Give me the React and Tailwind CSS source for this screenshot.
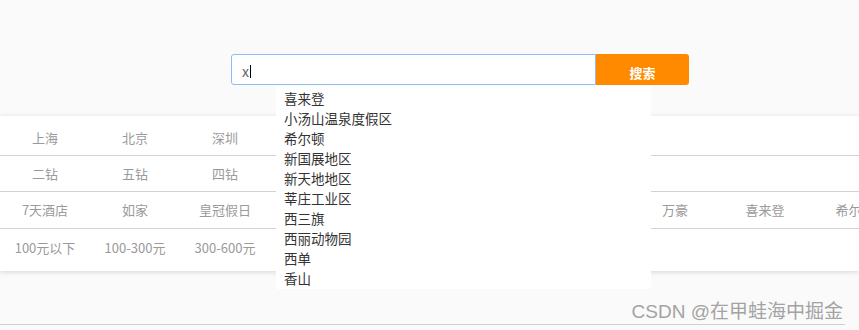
import React from 'react';

const font = { fontFamily: '"Microsoft YaHei", "Noto Sans CJK SC", "Noto Sans", sans-serif' };

// null = cell hidden under the suggestion list
const rows = [
  { items: ['上海', '北京', '深圳'], cls: 'h-[40px] pt-[4px]' },
  { items: ['二钻', '五钻', '四钻'], cls: 'h-[36px]' },
  { items: ['7天酒店', '如家', '皇冠假日', null, null, null, null, '万豪', '喜来登', '希尔顿'], cls: 'h-[37px]' },
  { items: ['100元以下', '100-300元', '300-600元'], cls: 'h-[42px] pb-[4px] border-b-0' },
];

const suggestions = ['喜来登', '小汤山温泉度假区', '希尔顿', '新国展地区', '新天地地区', '莘庄工业区', '西三旗', '西丽动物园', '西单', '香山'];

export default function App() {
  return (
    <div className="relative w-full h-[330px] bg-[#fafafa] overflow-hidden" style={font}>
      {/* search bar */}
      <div className="pt-[54px] pl-[231px] flex">
        <div className="relative flex">
          <div className="w-[365px] h-[31px] bg-white border border-[#8dbdf3] rounded-l-[3px] flex items-center pl-[10px] pt-[3px]">
            <span className="text-[14px] text-[#666] leading-none">x</span>
            <span className="w-[1px] h-[13px] bg-black ml-[1px]" />
          </div>
          <button className="w-[93px] h-[31px] bg-[#ff8a00] rounded-r-[3px] text-white text-[13px] font-bold pt-[6px] leading-none">
            搜索
          </button>

          {/* suggestion dropdown */}
          <div className="absolute z-10 left-[45px] top-[32px] w-[375px] bg-white pt-[2px] pb-[1px]">
            {suggestions.map((s) => (
              <div key={s} className="h-[20px] leading-[20px] pl-[8px] text-[13.5px] text-[#333]">
                {s}
              </div>
            ))}
          </div>
        </div>
      </div>

      {/* filter panel */}
      <div className="mt-[31px] bg-white shadow-[0_1px_5px_rgba(0,0,0,0.15)]">
        {rows.map((r, i) => (
          <div key={i} className={`flex items-center border-b border-[#d2d2d2] ${r.cls}`}>
            {r.items.map((t, j) => (
              <div key={j} className="w-[90px] shrink-0 text-center text-[13px] text-[#9a9a9a] whitespace-nowrap">
                {t}
              </div>
            ))}
          </div>
        ))}
      </div>

      {/* bottom rule */}
      <div className="mt-[53px] mr-[14px] border-b border-[#cfcfcf]" />

      <div
        className="absolute right-[16px] bottom-[9px] text-[19px] text-[#a3a3a3] leading-none"
        style={{ fontFamily: '"Liberation Sans", "Noto Sans CJK SC", sans-serif' }}
      >
        CSDN @在甲蛙海中掘金
      </div>
    </div>
  );
}
